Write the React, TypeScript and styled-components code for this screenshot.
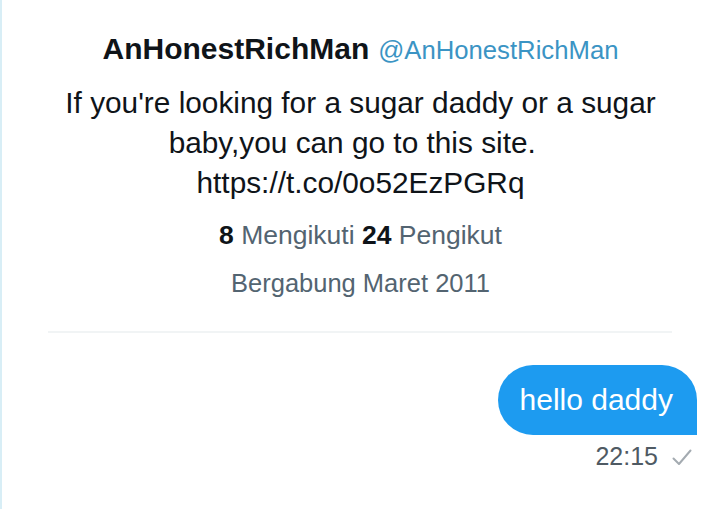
import React from "react";
import styled, { createGlobalStyle } from "styled-components";

const Global = createGlobalStyle`
  html, body { margin: 0; padding: 0; background: #ffffff; }
  body { font-family: "Liberation Sans", Arial, sans-serif; }
`;

const Page = styled.div`
  width: 719px;
  height: 509px;
  box-sizing: border-box;
  border-left: 2px solid #d8eef6;
  background: #fff;
  display: flex;
  flex-direction: column;
  overflow: hidden;
`;

const Profile = styled.section`
  display: flex;
  flex-direction: column;
  align-items: center;
  padding-top: 32px;
`;

const NameRow = styled.div`
  display: flex;
  align-items: baseline;
  gap: 9px;
  line-height: 34px;
`;

const Name = styled.span`
  font-size: 30px;
  font-weight: 700;
  color: #0f1419;
`;

const Handle = styled.span`
  font-size: 25.7px;
  color: #3b94c4;
`;

const Bio = styled.p`
  margin: 16px 0 0;
  width: 640px;
  text-align: center;
  font-size: 29.8px;
  line-height: 40px;
  color: #0f1419;
`;

const Stats = styled.div`
  margin-top: 16px;
  font-size: 26.5px;
  line-height: 32px;
  color: #536471;
`;

const Count = styled.b`
  color: #0f1419;
  font-weight: 700;
`;

const Joined = styled.div`
  margin-top: 16px;
  font-size: 25.5px;
  line-height: 32px;
  color: #536471;
`;

const Divider = styled.hr`
  margin: 32px 47px 0 46px;
  border: 0;
  border-top: 2px solid #f1f4f5;
`;

const Thread = styled.section`
  display: flex;
  flex-direction: column;
  align-items: flex-end;
  padding: 32px 22px 0 0;
`;

const Bubble = styled.div`
  height: 70px;
  box-sizing: border-box;
  padding: 0 24px 0 22px;
  display: flex;
  align-items: center;
  background: #1d9bf0;
  color: #fff;
  font-size: 30px;
  border-radius: 35px 35px 0 35px;
`;

const Meta = styled.div`
  display: flex;
  align-items: center;
  gap: 14px;
  margin-top: 7px;
  padding-right: 5px;
  font-size: 25px;
  color: #4f5a63;
`;

const Check = () => (
  <svg width="20" height="18" viewBox="0 0 20 18" fill="none">
    <path d="M1.5 10.5 L7 16 L18.5 2.5" stroke="#a4abb1" strokeWidth="2" strokeLinecap="round" strokeLinejoin="round" />
  </svg>
);

export default function App() {
  return (
    <Page>
      <Global />
      <Profile>
        <NameRow>
          <Name>AnHonestRichMan</Name>
          <Handle>@AnHonestRichMan</Handle>
        </NameRow>
        <Bio>
          {"If you're looking for a sugar daddy or a sugar baby,you can go to this site.\u00a0\u00a0 https://t.co/0o52EzPGRq"}
        </Bio>
        <Stats>
          <Count>8</Count> Mengikuti <Count>24</Count> Pengikut
        </Stats>
        <Joined>Bergabung Maret 2011</Joined>
      </Profile>
      <Divider />
      <Thread>
        <Bubble>hello daddy</Bubble>
        <Meta>
          22:15
          <Check />
        </Meta>
      </Thread>
    </Page>
  );
}
